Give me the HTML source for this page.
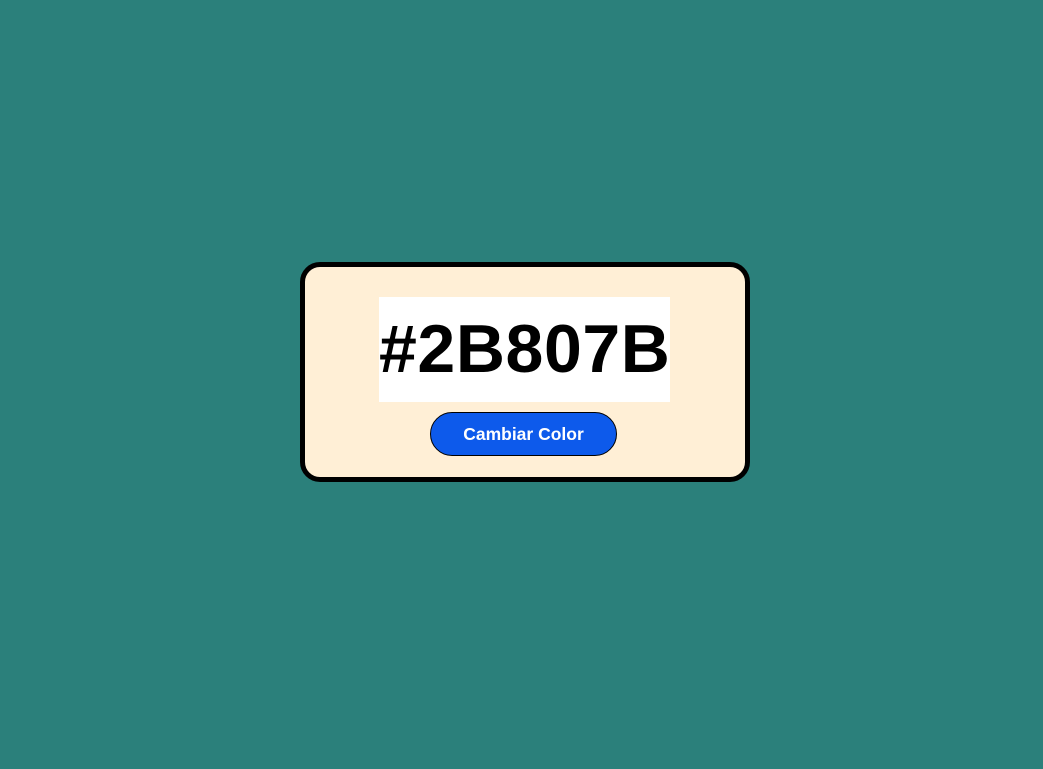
<!DOCTYPE html>
<html><head><meta charset="utf-8"><style>
html,body{margin:0;width:1043px;height:769px;background:#2B807B;overflow:hidden;font-family:"Liberation Sans",Arial,sans-serif;}
.card{position:absolute;left:300px;top:262px;width:440px;height:210px;border:5px solid #000;border-radius:20px;background:#FFEFD6;}
.hex{position:absolute;left:74px;top:30px;width:291px;height:105px;background:#fff;font-weight:bold;font-size:68px;line-height:105px;text-align:center;color:#000;letter-spacing:0.6px;}
.btn{position:absolute;left:125px;top:145px;width:185px;height:42px;border:1.5px solid #000;border-radius:23px;background:#0D5AEB;color:#fff;font-weight:bold;font-size:17.5px;line-height:42px;text-align:center;}
</style></head><body>
<div class="card"><div class="hex">#2B807B</div><div class="btn">Cambiar Color</div></div>
</body></html>
